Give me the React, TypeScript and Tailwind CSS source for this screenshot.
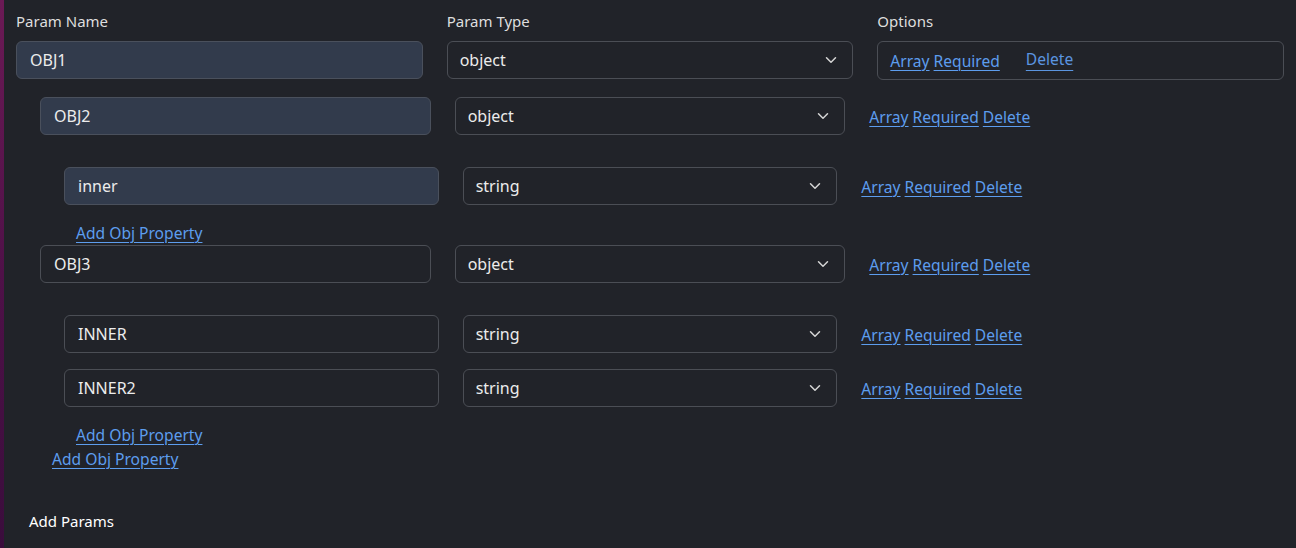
import { ChevronDown } from "lucide-react";
import { ReactNode } from "react";

type ParamType = "object" | "string";

interface Param {
  name: string;
  type: ParamType;
  filled?: boolean;
  children?: Param[];
}

const params: Param[] = [
  {
    name: "OBJ1",
    type: "object",
    filled: true,
    children: [
      {
        name: "OBJ2",
        type: "object",
        filled: true,
        children: [{ name: "inner", type: "string", filled: true }],
      },
      {
        name: "OBJ3",
        type: "object",
        children: [
          { name: "INNER", type: "string" },
          { name: "INNER2", type: "string" },
        ],
      },
    ],
  },
];

const font = { fontFamily: '"Noto Sans", "Open Sans", sans-serif' };

function LinkText({ children }: { children: ReactNode }) {
  return (
    <a
      href="#"
      className="text-[#5d9dee] underline underline-offset-[3px] decoration-1"
    >
      {children}
    </a>
  );
}

function NameInput({ value, filled }: { value: string; filled?: boolean }) {
  return (
    <input
      readOnly
      value={value}
      className={
        filled
          ? "h-[38px] w-full rounded-md border border-[#4a505c] bg-[#323b4c] px-[13px] text-[16px] text-[#ececec] outline-none"
          : "h-[38px] w-full rounded-md border border-[#4b4e55] bg-transparent px-[13px] text-[16px] text-[#ececec] outline-none"
      }
    />
  );
}

function TypeSelect({ value }: { value: ParamType }) {
  return (
    <div className="relative">
      <select
        value={value}
        onChange={() => {}}
        className="h-[38px] w-full appearance-none rounded-md border border-[#4b4e55] bg-transparent px-3 text-[16px] text-[#ececec] outline-none"
      >
        <option value="object">object</option>
        <option value="string">string</option>
      </select>
      <ChevronDown
        size={18}
        strokeWidth={2}
        className="pointer-events-none absolute right-[13px] top-[10px] text-[#d6d6d6]"
      />
    </div>
  );
}

function ParamItem({ param, depth }: { param: Param; depth: number }) {
  const isObj = param.type === "object";
  return (
    <div>
      <div className={isObj ? "grid grid-cols-3 gap-6" : "grid grid-cols-3 gap-6 mb-4"}>
        <NameInput value={param.name} filled={param.filled} />
        <TypeSelect value={param.type} />
        {depth === 0 ? (
          <div className="flex h-[39px] items-center rounded-md border border-[#4b4e55] px-3">
            <div className="mt-[2px] flex gap-1 text-[15.6px]">
              <LinkText>Array</LinkText>
              <LinkText>Required</LinkText>
            </div>
            <button className="ml-[26px] -mt-[1px] text-[15.6px] text-[#5b95e0] underline underline-offset-[5px] decoration-1">
              Delete
            </button>
          </div>
        ) : (
          <div className="flex items-center gap-1 pt-[3px] text-[15.6px]">
            <LinkText>Array</LinkText>
            <LinkText>Required</LinkText>
            <LinkText>Delete</LinkText>
          </div>
        )}
      </div>
      {isObj && (
        <div className={depth === 0 ? "mx-6 mt-[17px]" : "mx-6 mt-8"}>
          {param.children?.map((c) => (
            <ParamItem key={c.name} param={c} depth={depth + 1} />
          ))}
          {depth > 0 && (
            <div className="ml-3 h-6 text-[15.6px] leading-6">
              <LinkText>Add Obj Property</LinkText>
            </div>
          )}
        </div>
      )}
      {depth === 0 && (
        <div className="ml-9 h-6 text-[15.6px] leading-6">
          <LinkText>Add Obj Property</LinkText>
        </div>
      )}
    </div>
  );
}

export default function App() {
  return (
    <div className="flex h-[548px] w-[1296px] overflow-hidden bg-[#212329]" style={font}>
      {/* window edge behind */}
      <div className="w-1 shrink-0 bg-gradient-to-b from-[#6b1a55] via-[#4f1148] to-[#3a0d3c]" />
      <div className="flex-1 pl-3 pr-3 pt-[9px]">
        <div className="mb-2 grid grid-cols-3 gap-6 text-[15px] leading-6 text-[#dedede]">
          <div>Param Name</div>
          <div>Param Type</div>
          <div>Options</div>
        </div>
        {params.map((p) => (
          <ParamItem key={p.name} param={p} depth={0} />
        ))}
        <button className="mt-[38px] px-[13px] text-[15px] leading-6 text-white">
          Add Params
        </button>
      </div>
    </div>
  );
}
